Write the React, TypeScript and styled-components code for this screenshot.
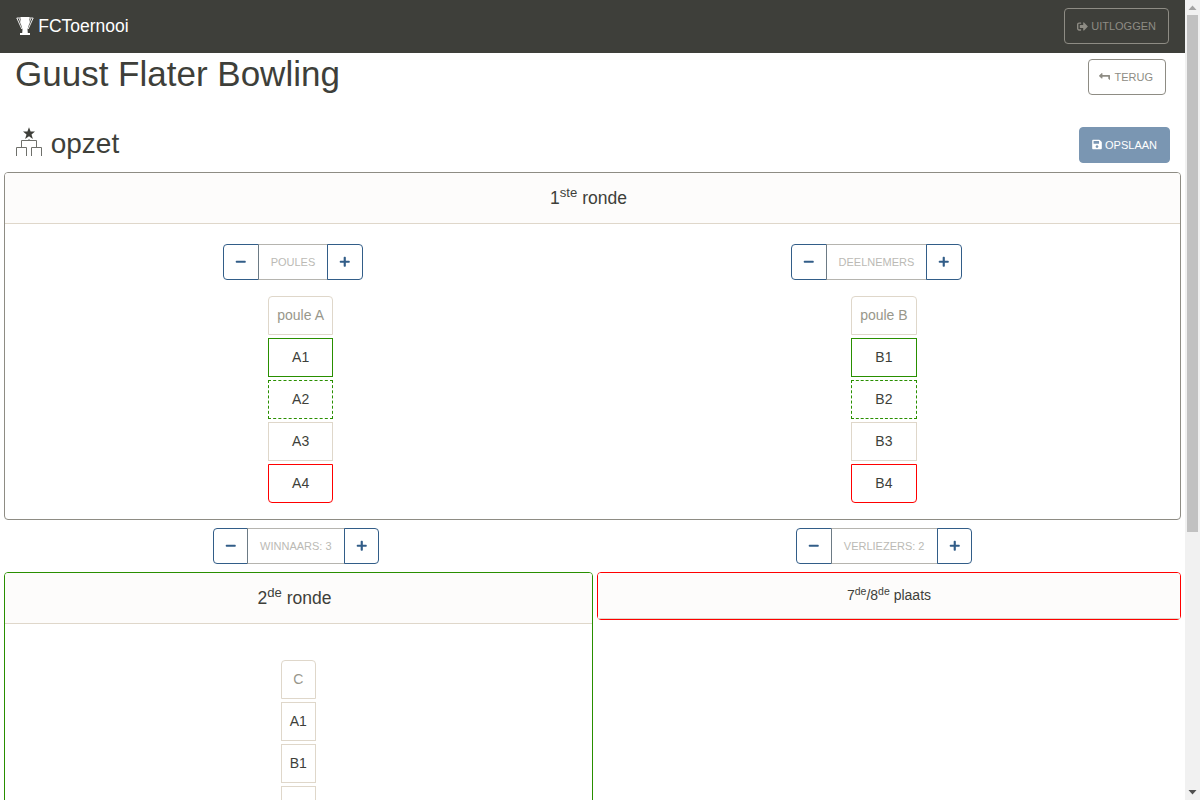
import React from "react";
import styled, { createGlobalStyle } from "styled-components";
import { FaSignOutAlt, FaLevelUpAlt, FaSave, FaMinus, FaPlus } from "react-icons/fa";

const Global = createGlobalStyle`
  *, *::before, *::after { box-sizing: border-box; }
  body {
    margin: 0;
    overflow: hidden;
    background: #fff;
    color: #3e3f3a;
    font: 14px/21px "Liberation Sans", Arial, sans-serif;
  }
`;

const Window = styled.div`
  display: flex;
  height: 800px;
  overflow: hidden;
`;

const Content = styled.div`
  flex: 1;
  min-width: 0;
  height: 800px;
  overflow: hidden;
`;

const Navbar = styled.nav`
  height: 53px;
  padding: 0 16px 1px;
  display: flex;
  align-items: center;
  justify-content: space-between;
  background: #3e3f3a;
`;

const Brand = styled.div`
  display: flex;
  align-items: center;
  gap: 4.2px;
  color: #fff;
  font-size: 17.5px;
  line-height: 26px;
`;

const Button = styled.button<{ $solid?: boolean }>`
  height: 36px;
  padding: 0 12px;
  display: flex;
  align-items: center;
  gap: 3px;
  border: 1px solid ${(p) => (p.$solid ? "#7a96b2" : "#8e8c84")};
  border-radius: 4px;
  background: ${(p) => (p.$solid ? "#7a96b2" : "transparent")};
  color: ${(p) => (p.$solid ? "#fff" : "#8e8c84")};
  font: 11px/16px "Liberation Sans", Arial, sans-serif;
  text-transform: uppercase;
`;

const SaveIcon = styled(FaSave)`
  width: 10px;
  height: 11px;
  margin-bottom: 1px;
`;

const BackIcon = styled(FaLevelUpAlt)`
  width: 11px;
  height: 11px;
  margin-bottom: 2px;
  transform: rotate(270deg);
`;

const TitleRow = styled.header`
  height: 68px;
  padding: 0 19px 0 15px;
  display: flex;
  justify-content: space-between;
  align-items: flex-start;
  ${Button} { margin-top: 6px; padding-left: 10px; gap: 5px; }
`;

const Title = styled.h1`
  margin: 0;
  font-size: 35px;
  line-height: 42px;
  font-weight: 400;
`;

const SectionRow = styled.div`
  height: 51px;
  padding: 6px 15px 0 15px;
  display: flex;
  justify-content: space-between;
  align-items: flex-start;
`;

const Section = styled.h2`
  margin: 0;
  display: flex;
  align-items: center;
  gap: 7.7px;
  font-size: 28px;
  line-height: 34px;
  font-weight: 400;
  svg { margin-bottom: 4px; }
`;

const Rounds = styled.main`
  padding: 0 4px;
`;

const Card = styled.section<{ $color: string; $height: number }>`
  height: ${(p) => p.$height}px;
  border: 1px solid ${(p) => p.$color};
  border-radius: 4px;
`;

const CardHeader = styled.div<{ $small?: boolean }>`
  height: ${(p) => (p.$small ? 46 : 51)}px;
  padding: ${(p) => (p.$small ? "0 0 2px" : "0 8px 0 0")};
  display: flex;
  align-items: center;
  justify-content: center;
  border-bottom: 1px solid #dfd7ca;
  border-radius: 3px 3px 0 0;
  background: #fdfcfb;
  font-size: ${(p) => (p.$small ? 14 : 17.5)}px;
  line-height: 26px;
  sup {
    position: relative;
    top: ${(p) => (p.$small ? "-0.4em" : "-0.5em")};
    font-size: 75%;
    line-height: 0;
    vertical-align: baseline;
  }
`;

const Columns = styled.div<{ $pad?: string; $trail?: number }>`
  display: grid;
  grid-template-columns: 1fr 1fr;
  justify-items: center;
  padding: ${(p) => p.$pad || "0"};
  & > * { margin-right: ${(p) => p.$trail || 0}px; }
`;

const StepperBox = styled.div`
  display: flex;
  height: 36px;
`;

const StepButton = styled.button<{ $end?: boolean }>`
  width: 35.6px;
  padding: 0 0 1px;
  display: flex;
  align-items: center;
  justify-content: center;
  border: 1px solid #325d88;
  border-radius: ${(p) => (p.$end ? "0 4px 4px 0" : "4px 0 0 4px")};
  margin-left: ${(p) => (p.$end ? "-1px" : "0")};
  background: transparent;
  color: #325d88;
  font-size: 11.5px;
`;

const StepLabel = styled.span`
  margin-left: -1px;
  padding: 0 12px;
  border: 1px solid rgba(142, 140, 132, 0.65);
  color: #bbbab5;
  font-size: 11px;
  line-height: 35px;
  text-transform: uppercase;
`;

const Pool = styled.div`
  display: flex;
  flex-direction: column;
  gap: 3px;
`;

const Place = styled.div<{ $kind?: "head" | "win" | "maybe" | "lose" }>`
  height: 39px;
  padding: 0 8px;
  border: 1px ${(p) => (p.$kind === "maybe" ? "dashed" : "solid")}
    ${(p) =>
      p.$kind === "win" || p.$kind === "maybe" ? "#298f00" : p.$kind === "lose" ? "#f00" : "#dfd7ca"};
  color: ${(p) => (p.$kind === "head" ? "#98978b" : "#3e3f3a")};
  line-height: 37px;
  text-align: center;
  white-space: nowrap;
  border-radius: ${(p) =>
    p.$kind === "head" ? "4px 4px 0 0" : p.$kind === "lose" ? "0 0 4px 4px" : "0"};
`;

const NextRounds = styled.div`
  display: grid;
  grid-template-columns: 589px 584px;
  gap: 4px;
  align-items: start;
`;

const Centered = styled.div`
  padding: 36px 0.6px 0 0;
  display: flex;
  justify-content: center;
`;

const Track = styled.aside`
  width: 15px;
  height: 800px;
  display: flex;
  flex-direction: column;
  align-items: center;
  justify-content: space-between;
  background: #f1f1f1;
  svg { display: block; }
`;

const Thumb = styled.div`
  width: 11px;
  height: 517px;
  margin-bottom: auto;
  background: #c1c1c1;
`;

function Stepper({ label }: { label: string }) {
  return (
    <StepperBox>
      <StepButton><FaMinus /></StepButton>
      <StepLabel>{label}</StepLabel>
      <StepButton $end><FaPlus /></StepButton>
    </StepperBox>
  );
}

function FirstRoundPool({ name }: { name: string }) {
  return (
    <Pool>
      <Place $kind="head">poule {name}</Place>
      <Place $kind="win">{name}1</Place>
      <Place $kind="maybe">{name}2</Place>
      <Place>{name}3</Place>
      <Place $kind="lose">{name}4</Place>
    </Pool>
  );
}

function Trophy() {
  return (
    <svg width="18" height="18" viewBox="0 0 18 18" fill="#fff">
      <path d="M4.500 0h9l-.4 7-1.600 5.500 .3 3.500H6.200l.3-3.500L4.900 7z" />
      <path d="M4 16h10v2H4z" />
      <path d="M4.800 1H.8L5.800 12M13.200 1h4L12.200 12M3.300 1.500l2 6M14.700 1.500l-2 6" fill="none" stroke="#fff" strokeWidth="0.9" />
    </svg>
  );
}

function Bracket() {
  return (
    <svg width="28" height="30" viewBox="0 0 28 30">
      <path d="M14 .3l1.600 4.300h4.400l-3.500 2.900 1.400 4.500-3.900-2.700-3.900 2.700 1.400-4.500L8 4.600h4.400z" fill="#3e3f3a" />
      <path d="M1.500 29V20.500H11.500V29M16.500 29V20.500H26.500V29M6.500 20V13.500H21.500V20M14 13.500V12" fill="none" stroke="#6f706b" />
    </svg>
  );
}

export default function App() {
  return (
    <>
      <Global />
      <Window>
        <Content>
          <Navbar>
            <Brand><Trophy />FCToernooi</Brand>
            <Button><FaSignOutAlt />Uitloggen</Button>
          </Navbar>
          <TitleRow>
            <Title>Guust Flater Bowling</Title>
            <Button><BackIcon />Terug</Button>
          </TitleRow>
          <SectionRow>
            <Section><Bracket />opzet</Section>
            <Button $solid><SaveIcon />Opslaan</Button>
          </SectionRow>
          <Rounds>
            <Card $color="#8e8c84" $height={348}>
              <CardHeader><span>1<sup>ste</sup> ronde</span></CardHeader>
              <Columns $pad="20px 4px 16px" $trail={15.6}>
                <Stepper label="Poules" />
                <Stepper label="Deelnemers" />
              </Columns>
              <Columns $pad="0 4.5px 0 4px">
                <FirstRoundPool name="A" />
                <FirstRoundPool name="B" />
              </Columns>
            </Card>
            <Columns $pad="8px 0.4px 8px 0" $trail={4.6}>
              <Stepper label="Winnaars: 3" />
              <Stepper label="Verliezers: 2" />
            </Columns>
            <NextRounds>
              <Card $color="#298f00" $height={400}>
                <CardHeader><span>2<sup>de</sup> ronde</span></CardHeader>
                <Centered>
                  <Pool>
                    <Place $kind="head">C</Place>
                    <Place>A1</Place>
                    <Place>B1</Place>
                    <Place />
                  </Pool>
                </Centered>
              </Card>
              <Card $color="#f00" $height={48}>
                <CardHeader $small><span>7<sup>de</sup>/8<sup>de</sup> plaats</span></CardHeader>
              </Card>
            </NextRounds>
          </Rounds>
        </Content>
        <Track>
          <svg width="15" height="15"><path d="M3.500 10h8L7.500 5.500z" fill="#a3a3a3" /></svg>
          <Thumb />
          <svg width="15" height="15"><path d="M3.500 5h8L7.500 9.500z" fill="#505050" /></svg>
        </Track>
      </Window>
    </>
  );
}
